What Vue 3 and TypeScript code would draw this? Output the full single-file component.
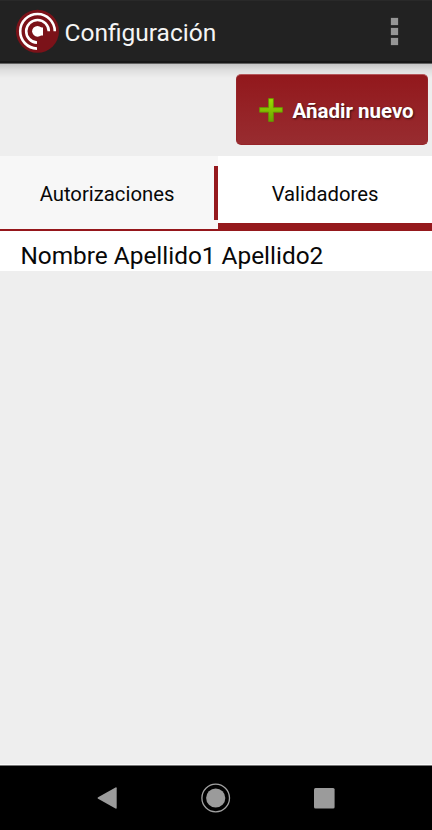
<script setup lang="ts">
import { ref } from 'vue'

const tabs: string[] = ['Autorizaciones', 'Validadores']
const active = ref<number>(1)
const validators: string[] = ['Nombre Apellido1 Apellido2']
</script>

<template>
  <div class="screen">
    <header class="bar">
      <svg class="logo" viewBox="0 0 44 44">
        <circle cx="22.5" cy="22.3" r="21.5" fill="#7b1219" />
        <g fill="none" stroke="#fff" stroke-width="2.6">
          <path d="M39.8 22.3A17.3 17.3 0 1 0 22 39.6" />
          <path d="M33.8 22.3A11.3 11.3 0 1 0 22 33.6" />
        </g>
        <circle cx="22.5" cy="22.3" r="5.4" fill="#fff" />
        <path d="M24 18.5h4v8H24z" fill="#fff" />
      </svg>
      <h1 class="title">Configuración</h1>
      <button class="more" aria-label="Menú"><i></i><i></i><i></i></button>
    </header>
    <section class="actions">
      <button class="add">
        <svg class="plus" viewBox="0 0 24 24">
          <defs>
            <linearGradient id="green" x1="0" y1="0" x2="0" y2="1">
              <stop offset="0" stop-color="#9ce000" />
              <stop offset="1" stop-color="#69a400" />
            </linearGradient>
          </defs>
          <path d="M9.6.6h4.8v9h9v4.6h-9v9.2H9.6v-9.2h-9V9.6h9z" fill="url(#green)" stroke="#669400" stroke-width=".8" />
        </svg>
        <span class="add-label">Añadir nuevo</span>
      </button>
    </section>
    <nav class="tabs">
      <button
        v-for="(tab, i) in tabs"
        :key="tab"
        class="tab"
        :class="{ active: active === i }"
        @click="active = i"
      >
        <span>{{ tab }}</span>
      </button>
      <i class="divider"></i>
    </nav>
    <ul class="list">
      <li v-for="name in validators" :key="name">{{ name }}</li>
    </ul>
    <main class="space"></main>
    <footer class="nav">
      <svg viewBox="0 0 30 30"><path d="M6.1 14.2L23.5 4.4q1.2-.5 1.2.8v19.6q0 1.3-1.2.8L6.1 15.8q-1.3-.8 0-1.6z" fill="#9b9b9b" /></svg>
      <svg viewBox="0 0 30 30">
        <circle cx="14.7" cy="15" r="13.8" fill="none" stroke="#a2a2a2" stroke-width="1.3" />
        <circle cx="14.7" cy="15" r="9.6" fill="#9b9b9b" />
      </svg>
      <svg viewBox="0 0 30 30"><rect x="4" y="5" width="20.6" height="20.4" rx="1.5" fill="#9b9b9b" /></svg>
    </footer>
  </div>
</template>

<style>
body {
  margin: 0;
}
</style>

<style scoped>
.screen {
  display: flex;
  flex-direction: column;
  width: 432px;
  height: 830px;
  overflow: hidden;
  background: #eee;
  color: #080808;
  font-family: Roboto, sans-serif;
}
button {
  border: 0;
  padding: 0;
  margin: 0;
  font: inherit;
  color: inherit;
  background: none;
}
.bar {
  display: flex;
  align-items: center;
  flex: none;
  box-sizing: border-box;
  height: 64px;
  padding: 0 34px 2px 15px;
  background: #222;
  border-bottom: 1px solid #606060;
  box-shadow: inset 0 1px #292929, inset 0 -2px #171717;
}
.logo {
  width: 44px;
  height: 44px;
}
.title {
  flex: 1;
  margin: 4px 0 0 5.5px;
  color: #f5f5f5;
  font-size: 24.5px;
  line-height: 28px;
  font-weight: 400;
  white-space: nowrap;
}
.more {
  display: grid;
  gap: 3px;
  padding: 1px 0 0;
}
.more i {
  width: 7px;
  height: 7px;
  background: #969696;
  box-shadow: 0 0 1px #777;
}
.actions {
  display: flex;
  justify-content: flex-end;
  flex: none;
  box-sizing: border-box;
  height: 92px;
  padding: 10px 4px 0;
  background: linear-gradient(#c5c5c5, #dedede 6px, #eee 14px);
}
.add {
  display: flex;
  align-items: center;
  box-sizing: border-box;
  width: 192.5px;
  height: 71px;
  padding-left: 22px;
  border: 1px solid #962429;
  border-top-color: #b5575b;
  border-radius: 5px;
  background: linear-gradient(#92181c, #982c30);
  color: #fff;
}
.plus {
  width: 24px;
  height: 24px;
}
.add-label {
  margin: 3px 0 0 10px;
  font-size: 20.5px;
  font-weight: 700;
  line-height: 24px;
  white-space: nowrap;
  text-shadow: 1px 1px 2px #361012;
}
.tabs {
  position: relative;
  display: grid;
  grid-template-columns: 218px 214px;
  flex: none;
  height: 75px;
}
.tab {
  box-sizing: border-box;
  padding: 3px 4px 0 0;
  border-bottom: 2px solid #95161b;
  background: #f7f7f7;
  font-size: 20.3px;
  line-height: 24px;
}
.tab.active {
  padding: 9px 0 0;
  border-bottom: 8px solid #95191d;
  background: #fff;
}
.divider {
  position: absolute;
  left: 214px;
  top: 10px;
  width: 4px;
  height: 54px;
  background: #95191d;
}
.list {
  flex: none;
  box-sizing: border-box;
  height: 40px;
  margin: 0;
  padding: 10px 0 0 20.4px;
  background: #fff;
  list-style: none;
  font-size: 24.4px;
  line-height: 30px;
  white-space: nowrap;
}
.space {
  flex: 1;
  border-bottom: 1px solid #fafafa;
}
.nav {
  display: flex;
  justify-content: center;
  flex: none;
  box-sizing: border-box;
  height: 65px;
  padding: 17px 0 0;
  gap: 79px;
  border-top: 1px solid #777;
  background: #000;
}
.nav svg {
  width: 30px;
  height: 30px;
}
</style>
